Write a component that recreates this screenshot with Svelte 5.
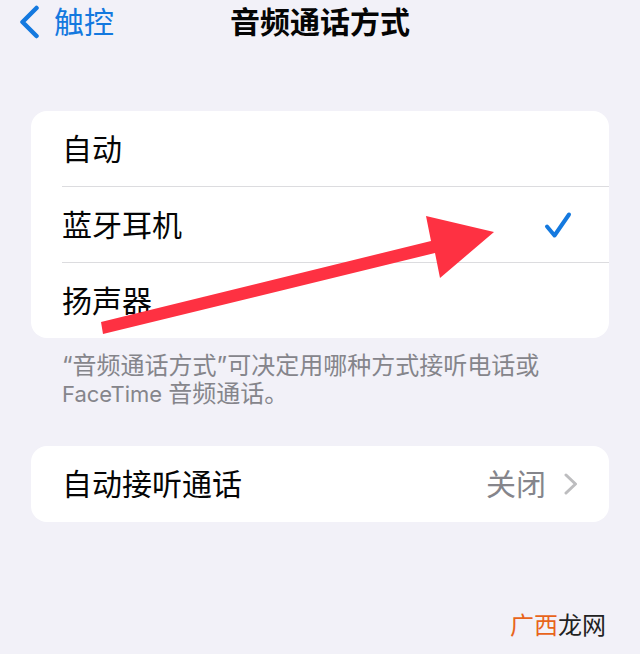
<script>
  let selected = $state('bluetooth');
  const routes = [
    { id: 'auto', label: '自动' },
    { id: 'bluetooth', label: '蓝牙耳机' },
    { id: 'speaker', label: '扬声器' }
  ];
</script>

<div class="screen">
  <header>
    <a class="back" href="#touch">
      <svg width="20" height="34" viewBox="0 0 20 34" aria-hidden="true"><path d="M17.5 3 L3.5 17 L17.5 31" /></svg>
      <span>触控</span>
    </a>
    <h1>音频通话方式</h1>
  </header>

  <main>
    <div class="card" role="radiogroup" aria-label="音频通话方式">
      {#each routes as route}
        <label class="row">
          <input type="radio" name="route" value={route.id} bind:group={selected} />
          <span class="line">
            <span>{route.label}</span>
            {#if selected === route.id}
              <svg class="check" width="28" height="28" viewBox="0 0 28 28" aria-hidden="true"><path d="M3 15.5 L10.5 24.5 L25 3.5" /></svg>
            {/if}
          </span>
        </label>
      {/each}
      <svg class="arrow" width="394" height="120" viewBox="0 0 394 120" aria-hidden="true"><path d="M0 106 L330 25 L325 0 L393 16 L339 62 L334 37 L2 118 Z" /></svg>
    </div>
    <p>“音频通话方式”可决定用哪种方式接听电话或<span class="latin">FaceTime{' '}</span>音频通话。</p>
    <button class="card answer">
      <span>自动接听通话</span>
      <span class="value">关闭</span>
      <svg width="14" height="22" viewBox="0 0 14 22" aria-hidden="true"><path d="M2 2 L11.5 11 L2 20" /></svg>
    </button>
  </main>
  <footer><span>广西</span>龙网</footer>
</div>

<style>
  :global(body) { margin: 0; background: #f2f1f8; }
  .screen {
    box-sizing: border-box;
    position: relative;
    min-height: 100vh;
    display: flex;
    flex-direction: column;
    background: #f2f1f8;
    color: #050505;
    font-family: Inter, "Noto Sans CJK SC", sans-serif;
    font-size: 30px;
    line-height: 44px;
  }
  header {
    display: grid;
    grid-template-columns: 1fr auto 1fr;
    align-items: center;
    height: 44px;
    padding: 0 19px;
  }
  .back { display: flex; align-items: center; gap: 15px; color: #1479df; text-decoration: none; }
  svg { flex: none; fill: none; stroke-linecap: round; stroke-linejoin: round; }
  .back svg { stroke: #1479df; stroke-width: 4.5; }
  h1 { margin: 0; font-size: 30px; font-weight: 700; line-height: 44px; }
  main { padding: 67px 31px 0; }
  .card { position: relative; box-sizing: border-box; width: 100%; border-radius: 16px; background: #fff; }
  .row { display: block; padding-left: 31px; cursor: pointer; }
  .row input { position: absolute; opacity: 0; margin: 0; }
  .line { display: flex; align-items: center; justify-content: space-between; height: 75px; padding-right: 37px; }
  .row + .row .line { border-top: 1px solid #dcdcdf; }
  .check { stroke: #1479df; stroke-width: 4; }
  .arrow { position: absolute; left: 70px; top: 105px; pointer-events: none; }
  .arrow path { fill: #fe3142; }
  p { margin: 14px 31px 38px; color: #85858b; font-size: 24px; line-height: 28px; }
  .latin { font-size: 22px; }
  .answer {
    display: flex;
    align-items: center;
    height: 76px;
    padding: 0 31px;
    border: 0;
    color: inherit;
    font: inherit;
    text-align: left;
  }
  .value { margin-left: auto; margin-right: 18px; color: #85858b; }
  .answer svg { stroke: #bdbdbf; stroke-width: 3; }
  footer { margin-top: auto; padding: 0 34px 10px; text-align: right; font-size: 24px; line-height: 36px; color: #222; }
  footer span { color: #e8641b; }
</style>
